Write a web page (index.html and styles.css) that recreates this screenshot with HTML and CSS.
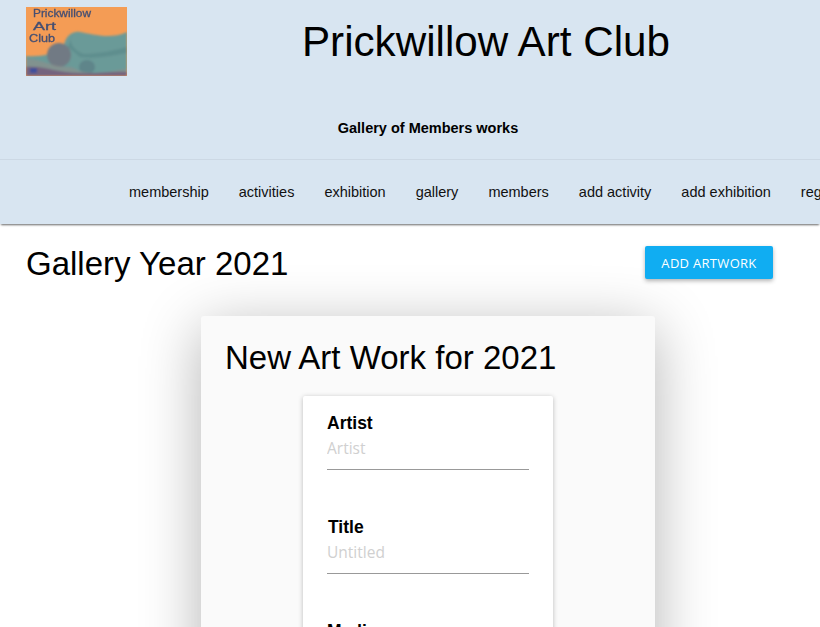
FILE: index.html
```html
<!DOCTYPE html>
<html lang="en">
<head>
    <meta charset="UTF-8">
    <title>Prickwillow Art Club</title>
    <link rel="stylesheet" href="styles.css">
</head>
<body>
    <header class="site-header">
        <div class="brand">
            <svg class="logo" viewBox="0 0 101 69" role="img" aria-label="Prickwillow Art Club logo">
                <defs>
                    <filter id="soft"><feGaussianBlur stdDeviation="1"/></filter>
                    <filter id="softer"><feGaussianBlur stdDeviation="0.45"/></filter>
                </defs>
                <rect width="101" height="69" fill="#f49c55"/>
                <g filter="url(#soft)">
                    <path d="M0 49C14 50 28 48 38 38C40 29 46 24 54 25C66 27 84 33 101 25V69H0Z" fill="#6b9a98"/>
                    <path d="M47 26C43 32 44 42 58 47C72 47 90 43 101 40V46C84 49 70 52 54 50L42 40Z" fill="#5f8e8e"/>
                    <ellipse cx="33" cy="48" rx="12" ry="12" fill="#717a84"/>
                    <ellipse cx="61" cy="60" rx="8" ry="7" fill="#5f858a"/>
                    <path d="M0 52C14 51 24 60 44 60C50 61 52 66 70 66C84 66 94 62 101 62V69H0Z" fill="#8a8f8c" opacity="0.7"/>
                    <path d="M0 60C18 58 30 66 54 66C70 67 88 64 101 65V69H0Z" fill="#75647e"/>
                    <rect x="4" y="61" width="7" height="5" fill="#3f4f9a"/>
                </g>
                <g class="logo-text" filter="url(#softer)">
                    <text x="7" y="10" textLength="58" lengthAdjust="spacingAndGlyphs">Prickwillow</text>
                    <text x="7" y="23" textLength="23" lengthAdjust="spacingAndGlyphs">Art</text>
                    <text x="3" y="35" textLength="26" lengthAdjust="spacingAndGlyphs">Club</text>
                </g>
            </svg>
            <h1 class="site-title">Prickwillow Art Club</h1>
        </div>
        <p class="site-sub">Gallery of Members works</p>
    </header>
    <nav class="main-nav">
        <a href="#">membership</a>
        <a href="#">activities</a>
        <a href="#">exhibition</a>
        <a href="#">gallery</a>
        <a href="#">members</a>
        <a href="#">add activity</a>
        <a href="#">add exhibition</a>
        <a href="#">register</a>
    </nav>
    <main class="content">
        <div class="gallery-head">
            <h2>Gallery Year 2021</h2>
            <button class="add-btn" type="button">Add Artwork</button>
        </div>
        <section class="dialog">
            <h2>New Art Work for 2021</h2>
            <form class="art-form">
                <div class="field">
                    <label for="artist">Artist</label>
                    <input id="artist" type="text" placeholder="Artist">
                </div>
                <div class="field">
                    <label class="title-label" for="title">Title</label>
                    <input id="title" type="text" placeholder="Untitled">
                </div>
                <div class="field">
                    <label for="medium">Medium</label>
                    <input id="medium" type="text" placeholder="Medium">
                </div>
            </form>
        </section>
    </main>
</body>
</html>
```

FILE: styles.css
```css
html, body {
    height: 627px;
    overflow: hidden;
}
body {
    margin: 0;
    font-family: "Liberation Sans", Arial, sans-serif;
    color: #000;
    background-color: #fff;
}
.site-header {
    height: 159px;
    background-color: #d8e5f1;
    border-bottom: 1px solid #ccd8e4;
}
.brand {
    display: flex;
    padding: 7px 0 0 26px;
}
.logo {
    width: 101px;
    height: 69px;
    flex: none;
}
.logo-text {
    font-family: "Liberation Sans", Arial, sans-serif;
    font-size: 11px;
    fill: #454f72;
    stroke: #454f72;
    stroke-width: 0.3px;
}
.site-title {
    margin: 10px 0 0;
    flex: 1;
    padding-left: 25px;
    text-align: center;
    font-size: 42.2px;
    line-height: 50px;
    font-weight: normal;
}
.site-sub {
    margin: 44px 0 0 36px;
    text-align: center;
    font-size: 14.5px;
    line-height: 17px;
    font-weight: bold;
}
.main-nav {
    display: flex;
    gap: 30px;
    height: 64px;
    align-items: center;
    padding-left: 129px;
    background-color: #d8e5f1;
    overflow: hidden;
    white-space: nowrap;
    box-shadow: 0 2px 2px -1px rgba(0, 0, 0, 0.6);
    position: relative;
}
.main-nav a {
    color: #111;
    font-size: 14.5px;
    text-decoration: none;
}
.gallery-head {
    display: flex;
    justify-content: space-between;
    align-items: center;
    padding: 21px 47px 0 26px;
}
.gallery-head h2 {
    margin: 0;
    padding-top: 2px;
    font-size: 33px;
    line-height: 34px;
    font-weight: normal;
}
.add-btn {
    width: 128px;
    height: 33px;
    margin-bottom: 1px;
    border: none;
    border-radius: 2px;
    background-color: #10adf2;
    color: #fff;
    font-family: "Open Sans", sans-serif;
    font-size: 13px;
    letter-spacing: 0.3px;
    text-transform: uppercase;
    box-shadow: 0 2px 4px rgba(0, 0, 0, 0.3);
}
.dialog {
    width: 454px;
    height: 400px;
    margin: 35px 0 0 201px;
    padding: 24px 0 0;
    box-sizing: border-box;
    background-color: #fafafa;
    border-radius: 3px;
    box-shadow: 0 12px 60px rgba(0, 0, 0, 0.3);
}
.dialog h2 {
    margin: 0 0 0 24px;
    font-size: 33px;
    line-height: 36px;
    font-weight: normal;
}
.art-form {
    width: 250px;
    height: 300px;
    margin: 20px 0 0 102px;
    padding: 18px 24px 0;
    box-sizing: border-box;
    background-color: #fff;
    border-radius: 2px;
    box-shadow: 0 1px 5px rgba(0, 0, 0, 0.25);
}
.field {
    width: 202px;
    height: 104px;
}
.field label {
    display: block;
    font-size: 17.5px;
    line-height: 19px;
    font-weight: bold;
}
.title-label {
    padding-left: 1px;
}
.field input {
    display: block;
    width: 100%;
    height: 37px;
    margin: 0;
    padding: 0 0 6px;
    box-sizing: border-box;
    border: none;
    border-bottom: 1px solid #999;
    outline: none;
    background: none;
    font-family: "Open Sans", sans-serif;
    font-size: 15.5px;
}
.field input::placeholder {
    color: #d0d0d0;
}
```
